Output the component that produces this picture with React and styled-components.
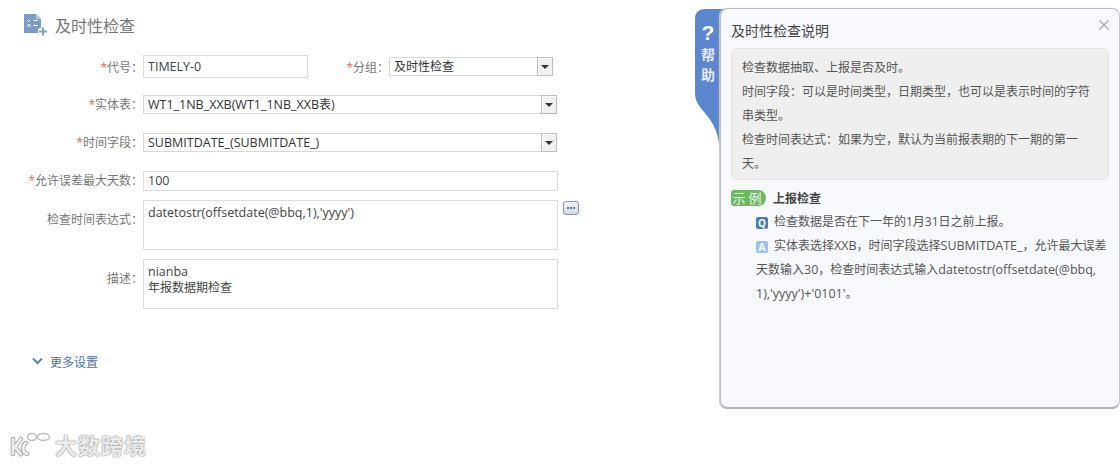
import React from 'react'
import styled, { createGlobalStyle } from 'styled-components'

const GlobalStyle = createGlobalStyle`
  html, body {
    margin: 0;
    padding: 0;
    background: #fff;
    font-family: "Open Sans", "Noto Sans CJK SC", sans-serif;
    font-size: 12px;
  }
`

const Page = styled.div`
  position: relative;
  display: flex;
  width: 1120px;
  height: 465px;
  overflow: hidden;
`

const FormPane = styled.div`
  width: 720px;
  flex: none;
  padding-top: 14px;
  box-sizing: border-box;
`

const Heading = styled.div`
  display: flex;
  align-items: center;
  gap: 8px;
  height: 24px;
  box-sizing: border-box;
  padding: 0 0 2px 24px;
  margin-bottom: 17px;
  font-size: 16px;
  color: #777;
`

const HeadingIcon = styled.svg`
  align-self: flex-start;
`

const Row = styled.div`
  display: flex;
  align-items: ${p => p.$top ? 'flex-start' : 'center'};
  min-height: ${p => p.$h || 19}px;
  margin-bottom: ${p => p.$gap || 19}px;
`

const Label = styled.div`
  width: ${p => p.$w || 143}px;
  flex: none;
  text-align: right;
  color: #777;
  line-height: 16px;
  padding-top: ${p => p.$pt || 0}px;
  white-space: nowrap;
`

const Star = styled.span`
  color: #e8655a;
`

const Latin = styled.span`
  font-size: 12.5px;
`

const TextField = styled.div`
  width: ${p => p.$w}px;
  height: ${p => p.$h}px;
  box-sizing: border-box;
  border: 1px solid #dcdcdc;
  padding: 0 4px;
  color: #444;
  line-height: ${p => p.$h - 2}px;
  white-space: nowrap;
`

const Combo = styled.div`
  display: flex;
  width: ${p => p.$w}px;
  height: 19px;
  box-sizing: border-box;
  border: 1px solid #d8d8d8;
  color: #333;
  line-height: 17px;
`

const ComboText = styled.div`
  flex: 1;
  padding-left: 4px;
  white-space: nowrap;
`

const ComboButton = styled.div`
  display: flex;
  align-items: center;
  justify-content: center;
  width: 16px;
  margin: -1px -1px -1px 0;
  box-sizing: border-box;
  background: #f1f1f1;
  border: 1px solid #bdbdbd;
  box-shadow: inset 1px 1px 0 #fff;
  &::after {
    content: '';
    border-left: 4px solid transparent;
    border-right: 4px solid transparent;
    border-top: 4px solid #333;
  }
`

const TextArea = styled.div`
  width: 415px;
  height: 50px;
  box-sizing: border-box;
  border: 1px solid #dcdcdc;
  padding: 4px 4px;
  color: #444;
  line-height: 16px;
`

const MoreButton = styled.div`
  display: flex;
  align-items: center;
  justify-content: center;
  gap: 1px;
  width: 16px;
  height: 14px;
  margin: 1px 0 0 5px;
  box-sizing: border-box;
  border: 1px solid #8a97a5;
  border-radius: 3px;
  background: linear-gradient(#f4f7fa, #cfd9e3);
`

const Dot = styled.i`
  width: 2px;
  height: 2px;
  background: #5b7590;
`

const MoreSettings = styled.div`
  display: flex;
  align-items: center;
  gap: 7px;
  margin-top: 44px;
  padding-left: 32px;
  color: #4d729e;
`

const Chevron = styled.svg`
  margin-top: -2px;
`

const Watermark = styled.div`
  position: absolute;
  left: 9px;
  bottom: 6px;
  display: flex;
  align-items: center;
  gap: 2px;
  font-size: 22px;
  font-weight: 700;
  line-height: 28px;
  letter-spacing: 1px;
  color: #ececec;
  text-shadow: 0 0 2px #888, 0 0 1px #999;
`

const HelpTab = styled.div`
  position: absolute;
  left: 695px;
  top: 9px;
  width: 30px;
  height: 145px;
`

const TabShape = styled.svg`
  position: absolute;
  inset: 0;
`

const TabText = styled.div`
  position: relative;
  width: 26px;
  display: flex;
  flex-direction: column;
  align-items: center;
  padding-top: 12px;
  color: #e8eef8;
  font-weight: 700;
  font-size: 14px;
  line-height: 20px;
`

const QuestionMark = styled.div`
  font-family: "Liberation Sans", sans-serif;
  font-size: 21px;
  line-height: 24px;
  color: #fff;
`

const HelpPanel = styled.div`
  position: relative;
  width: 400px;
  height: 401px;
  margin-top: 8px;
  box-sizing: border-box;
  padding: 0 10px 0 10px;
  background: #f8f9fc;
  border: 1px solid #bdbdbd;
  border-right-color: #c4c4c4;
  border-bottom: 2px solid #b4b4b4;
  border-radius: 8px;
  box-shadow: -1px 0 1px #ccc;
`

const PanelTitle = styled.div`
  height: 39px;
  line-height: 43px;
  font-size: 14px;
  color: #444;
`

const CloseIcon = styled.svg`
  position: absolute;
  right: 10px;
  top: 11px;
`

const NoteBox = styled.div`
  width: 378px;
  height: 132px;
  box-sizing: border-box;
  padding: 7px 10px 0;
  background: #efefef;
  border: 1px solid #e4e4e4;
  border-radius: 6px;
  line-height: 24px;
  color: #555;
`

const ExampleHead = styled.div`
  display: flex;
  align-items: center;
  gap: 7px;
  height: 16px;
  margin-top: 10px;
  font-weight: 700;
  color: #444;
`

const ExampleBadge = styled.span`
  width: 35px;
  height: 16px;
  border-radius: 3px 8px 8px 3px;
  background: #6db862;
  color: #e9f6e6;
  font-weight: 400;
  font-size: 13px;
  line-height: 16px;
  text-align: center;
  letter-spacing: 3px;
`

const ExampleBody = styled.div`
  width: 352px;
  margin: 4px 0 0 25px;
  line-height: 24px;
  color: #555;
`

const Mark = styled.span`
  display: inline-block;
  width: 12px;
  height: 12px;
  margin-right: 6px;
  border-radius: 2px;
  background: ${p => p.$bg};
  color: #fff;
  font-weight: 700;
  font-size: 10px;
  line-height: 12px;
  text-align: center;
  vertical-align: -1px;
`

function TitleIcon() {
  return (
    <HeadingIcon width="23" height="23" viewBox="0 0 23 23">
      <path d="M0 0h12l5 5v9l-3 1v4H0z" fill="#7b9bcb" />
      <path d="M12 0l5 5h-5z" fill="#b5c8e4" />
      <path d="M3 6l1.500 1.500L7 5M9 6.500h5M3.500 10l3 3M6.500 10l-3 3M9 11.500h5" stroke="#fff" strokeWidth="1" fill="none" />
      <path d="M15 17.500h8M19 13.500v8" stroke="#7f9fcd" strokeWidth="2" fill="none" />
    </HeadingIcon>
  )
}

function WatermarkLogo() {
  return (
    <svg width="44" height="26" viewBox="0 0 44 26" fill="none">
      <g stroke="#999" strokeWidth="4.500" strokeLinecap="round">
        <path d="M4 7v15M12 7l-6 8 6 7M17 11c-4 2-4 9 1 11" />
      </g>
      <g stroke="#ececec" strokeWidth="3" strokeLinecap="round">
        <path d="M4 7v15M12 7l-6 8 6 7M17 11c-4 2-4 9 1 11" />
      </g>
      <ellipse cx="23" cy="5" rx="4.500" ry="3.500" stroke="#bbb" strokeWidth="1.500" />
      <ellipse cx="34.500" cy="5" rx="6" ry="3.500" stroke="#bbb" strokeWidth="1.500" />
    </svg>
  )
}

export default function App() {
  return (
    <Page>
      <GlobalStyle />
      <FormPane>
        <Heading>
          <TitleIcon />
          及时性检查
        </Heading>
        <Row $h={23} $gap={17}>
          <Label $pt={2}><Star>*</Star>代号：</Label>
          <TextField $w={165} $h={23}><Latin>TIMELY-0</Latin></TextField>
          <Label $w={81} $pt={2}><Star>*</Star>分组：</Label>
          <Combo $w={164}>
            <ComboText>及时性检查</ComboText>
            <ComboButton />
          </Combo>
        </Row>
        <Row>
          <Label><Star>*</Star>实体表：</Label>
          <Combo $w={414}>
            <ComboText><Latin>WT1_1NB_XXB(WT1_1NB_XXB</Latin>表<Latin>)</Latin></ComboText>
            <ComboButton />
          </Combo>
        </Row>
        <Row>
          <Label><Star>*</Star>时间字段：</Label>
          <Combo $w={414}>
            <ComboText><Latin>SUBMITDATE_(SUBMITDATE_)</Latin></ComboText>
            <ComboButton />
          </Combo>
        </Row>
        <Row $h={20} $gap={9}>
          <Label><Star>*</Star>允许误差最大天数：</Label>
          <TextField $w={415} $h={20}><Latin>100</Latin></TextField>
        </Row>
        <Row $top $h={50} $gap={9}>
          <Label $pt={12}>检查时间表达式：</Label>
          <TextArea><Latin>datetostr(offsetdate(@bbq,1),'yyyy')</Latin></TextArea>
          <MoreButton><Dot /><Dot /><Dot /></MoreButton>
        </Row>
        <Row $top $h={50} $gap={0}>
          <Label $pt={12}>描述：</Label>
          <TextArea><Latin>nianba</Latin><br />年报数据期检查</TextArea>
        </Row>
        <MoreSettings>
          <Chevron width="11" height="8" viewBox="0 0 11 8">
            <path d="M1 1.500l4.500 4.500L10 1.500" stroke="#5a80ab" strokeWidth="2" fill="none" />
          </Chevron>
          更多设置
        </MoreSettings>
      </FormPane>

      <HelpTab>
        <TabShape width="30" height="145" viewBox="0 0 30 145">
          <path d="M30 0H10Q0 0 0 10V84C0 104 24 104 25 145H30Z" fill="#5b87cf" />
        </TabShape>
        <TabText>
          <QuestionMark>?</QuestionMark>
          <div>帮</div>
          <div>助</div>
        </TabText>
      </HelpTab>

      <HelpPanel>
        <PanelTitle>及时性检查说明</PanelTitle>
        <CloseIcon width="10" height="10" viewBox="0 0 10 10">
          <path d="M0.500 0.500l9 9M9.500 0.500l-9 9" stroke="#a8a8a8" strokeWidth="1.200" fill="none" />
        </CloseIcon>
        <NoteBox>
          检查数据抽取、上报是否及时。<br />
          时间字段：可以是时间类型，日期类型，也可以是表示时间的字符串类型。<br />
          检查时间表达式：如果为空，默认为当前报表期的下一期的第一天。
        </NoteBox>
        <ExampleHead>
          <ExampleBadge>示例</ExampleBadge>
          上报检查
        </ExampleHead>
        <ExampleBody>
          <Mark $bg="#4a7db5">Q</Mark>检查数据是否在下一年的1月31日之前上报。<br />
          <Mark $bg="#9cc3e6">A</Mark>实体表选择<Latin>XXB</Latin>，时间字段选择<Latin>SUBMITDATE_</Latin>，允许最大误差天数输入<Latin>30</Latin>，检查时间表达式输入<Latin>datetostr(offsetdate(@bbq,<wbr />1),'yyyy')+'0101'</Latin>。
        </ExampleBody>
      </HelpPanel>

      <Watermark>
        <WatermarkLogo />
        大数跨境
      </Watermark>
    </Page>
  )
}
